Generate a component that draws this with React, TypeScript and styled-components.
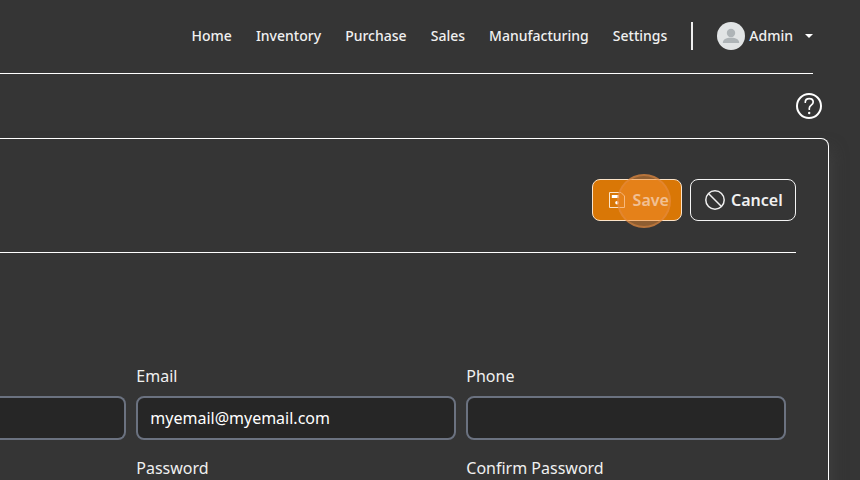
import React from "react";
import styled, { createGlobalStyle } from "styled-components";

const Global = createGlobalStyle`
  *, *::before, *::after { box-sizing: border-box; }
  html, body { margin: 0; background: #353535; overflow: hidden; }
  body { font-family: "Noto Sans", sans-serif; color: #f0f0f0; }
`;

const Page = styled.div`
  width: 860px;
  height: 480px;
  overflow: hidden;
  background: #353535;
`;

const Header = styled.header`
  width: 813px;
  height: 74px;
  border-bottom: 1px solid #fff;
  display: flex;
  justify-content: flex-end;
  align-items: center;
  padding-bottom: 2px;
`;

const Nav = styled.nav`
  display: flex;
  gap: 24.1px;
  margin-right: 24px;
`;

const NavLink = styled.a`
  font-size: 14px;
  font-weight: 500;
  line-height: 20px;
`;

const Divider = styled.div`
  width: 2px;
  height: 28px;
  background: #eee;
  margin-right: 24px;
`;

const Account = styled.div`
  display: flex;
  align-items: center;
  font-size: 14px;
  font-weight: 500;
  line-height: 20px;
`;

const AvatarIcon = styled.svg`
  width: 28px;
  height: 28px;
  margin-right: 4px;
`;

const Caret = styled.svg`
  width: 8px;
  height: 4px;
  margin-left: 12px;
`;

const HelpBar = styled.div`
  width: 822px;
  height: 64px;
  display: flex;
  align-items: center;
  justify-content: flex-end;
`;

const HelpIcon = styled.svg`
  width: 26px;
  height: 26px;
`;

const Panel = styled.main`
  width: 829px;
  height: 400px;
  border: 1px solid #fff;
  border-left: 0;
  border-radius: 0 8px 0 0;
  box-shadow: 6px 8px 15px -3px rgba(74, 74, 74, 0.5);
`;

const Actions = styled.div`
  width: 796px;
  height: 114px;
  padding-top: 40px;
  border-bottom: 1px solid #fff;
  display: flex;
  justify-content: flex-end;
  align-items: flex-start;
  gap: 8px;
`;

const Button = styled.button<{ $primary?: boolean }>`
  position: relative;
  width: ${(p) => (p.$primary ? 90 : 106)}px;
  height: 42px;
  padding: 0 0 0 ${(p) => (p.$primary ? 16 : 14)}px;
  display: flex;
  align-items: center;
  gap: ${(p) => (p.$primary ? 7.6 : 6)}px;
  border: 1px solid ${(p) => (p.$primary ? "#fbe3c8" : "#f4f4f4")};
  border-radius: 8px;
  background: ${(p) => (p.$primary ? "#d97706" : "transparent")};
  color: #f0f0f0;
  font: 600 16px/24px "Noto Sans", sans-serif;
`;

const ButtonIcon = styled.svg<{ $size: number }>`
  width: ${(p) => p.$size}px;
  height: ${(p) => p.$size}px;
  flex: none;
`;

const ClickMarker = styled.span`
  position: absolute;
  left: 23.500px;
  top: -6.500px;
  width: 54px;
  height: 54px;
  border-radius: 50%;
  background: rgba(243, 139, 47, 0.48);
  border: 2px solid rgba(226, 140, 70, 0.5);
`;

const Fields = styled.div`
  display: grid;
  grid-template-columns: 126px 320px 320px;
  column-gap: 10px;
  row-gap: 16px;
  padding-top: 111px;
`;

const Field = styled.label`
  display: flex;
  flex-direction: column;
  gap: 8px;
  font-size: 16px;
  line-height: 24px;
`;

const LabelText = styled.span`
  height: 24px;
  padding-left: 0.3px;
`;

const Input = styled.input<{ $cut?: boolean }>`
  width: 100%;
  height: 44px;
  border: 2px solid #6b7280;
  border-left-width: ${(p) => (p.$cut ? 0 : 2)}px;
  border-radius: ${(p) => (p.$cut ? "0 8px 8px 0" : "8px")};
  background: #262626;
  color: #fff;
  outline: none;
  padding: 0 12.3px;
  font: 400 16px/24px "Noto Sans", sans-serif;
`;

const links = ["Home", "Inventory", "Purchase", "Sales", "Manufacturing", "Settings"];

const fields = [
  { label: "", value: "", cut: true },
  { label: "Email", value: "myemail@myemail.com" },
  { label: "Phone", value: "" },
  { label: "", value: "", cut: true },
  { label: "Password", value: "" },
  { label: "Confirm Password", value: "" },
];

export default function App() {
  return (
    <Page>
      <Global />
      <Header>
        <Nav>
          {links.map((l) => (
            <NavLink key={l}>{l}</NavLink>
          ))}
        </Nav>
        <Divider />
        <Account>
          <AvatarIcon viewBox="0 0 28 28">
            <circle cx="14" cy="14" r="14" fill="#e1e4e5" />
            <circle cx="14" cy="11" r="4.200" fill="#aeb4b7" />
            <path d="M5.800 21c0-3.400 3.200-5.200 8.200-5.200s8.200 1.800 8.200 5.200z" fill="#aeb4b7" />
          </AvatarIcon>
          Admin
          <Caret viewBox="0 0 8 4">
            <path d="M0 0h8L4 4z" fill="#fff" />
          </Caret>
        </Account>
      </Header>
      <HelpBar>
        <HelpIcon viewBox="0 0 26 26" fill="none" stroke="#fff" strokeLinecap="round">
          <circle cx="13" cy="13" r="12" strokeWidth="2" />
          <path d="M9.300 9.200C9.300 7 11 5.700 13.200 5.700s4 1.300 4 3.400c0 3-3.900 3.200-3.900 6.200v.9" strokeWidth="1.700" />
          <circle cx="13.200" cy="20" r="1.200" fill="#fff" stroke="none" />
        </HelpIcon>
      </HelpBar>
      <Panel>
        <Actions>
          <Button $primary>
            <ButtonIcon $size={16} viewBox="0 0 16 16" fill="none" stroke="#fbe3c8">
              <path d="M.500.500h11.500l3.500 3.500v11.500H.500z" />
              <path d="M2.800 3H10v3H2.800z" fill="#fff" stroke="none" />
              <circle cx="8" cy="10.700" r="1.800" fill="#fff" stroke="none" />
            </ButtonIcon>
            Save
            <ClickMarker />
          </Button>
          <Button>
            <ButtonIcon $size={20} viewBox="0 0 20 20" fill="none" stroke="#f0f0f0" strokeWidth="1.500">
              <circle cx="10" cy="10" r="9.200" />
              <path d="M3.500 3.500l13 13" />
            </ButtonIcon>
            <span>Cancel</span>
          </Button>
        </Actions>
        <Fields>
          {fields.map((f, i) => (
            <Field key={i}>
              <LabelText>{f.label}</LabelText>
              <Input $cut={f.cut} defaultValue={f.value} />
            </Field>
          ))}
        </Fields>
      </Panel>
    </Page>
  );
}
